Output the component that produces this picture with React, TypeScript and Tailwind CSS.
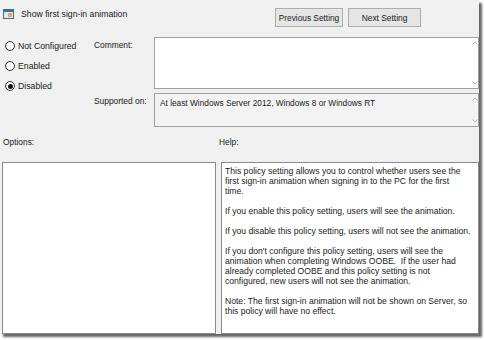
import { ReactNode } from "react";

const font = { fontFamily: '"Segoe UI", "Liberation Sans", Arial, sans-serif' };

function Radio({ label, checked }: { label: string; checked?: boolean }) {
  return (
    <div className="flex items-center h-[10px]">
      <span className="w-[10px] h-[10px] rounded-full border border-[#333] bg-white flex items-center justify-center">
        {checked && <span className="w-[5px] h-[5px] rounded-full bg-[#111]" />}
      </span>
      <span className="ml-[3px]">{label}</span>
    </div>
  );
}

function ScrollStub() {
  return (
    <div className="w-[7px] flex flex-col justify-between items-center py-[3px] text-[#b0b0b0]">
      <svg width="6" height="4" viewBox="0 0 6 4"><path d="M0.5 3.5 L3 1 L5.5 3.5" fill="none" stroke="currentColor" strokeWidth="1" /></svg>
      <svg width="6" height="4" viewBox="0 0 6 4"><path d="M0.5 0.5 L3 3 L5.5 0.5" fill="none" stroke="currentColor" strokeWidth="1" /></svg>
    </div>
  );
}

function Box({ children, className }: { children?: ReactNode; className: string }) {
  return <div className={"border border-[#a0a0a0] flex " + className}>{children}</div>;
}

const helpLines: string[][] = [
  [
    "This policy setting allows you to control whether users see the",
    "first sign-in animation when signing in to the PC for the first",
    "time.",
  ],
  ["If you enable this policy setting, users will see the animation."],
  ["If you disable this policy setting, users will not see the animation."],
  [
    "If you don't configure this policy setting, users will see the",
    "animation when completing Windows OOBE.  If the user had",
    "already completed OOBE and this policy setting is not",
    "configured, new users will not see the animation.",
  ],
  [
    "Note: The first sign-in animation will not be shown on Server, so",
    "this policy will have no effect.",
  ],
];

export default function App() {
  return (
    <div className="w-[484px] h-[340px] bg-white" style={font}>
      <div className="w-[479px] h-[334px] bg-[#f0f0f0] text-[8.4px] leading-[10px] text-[#1a1a1a] shadow-[3px_3px_2px_rgba(0,0,0,0.6)] flex flex-col">
        {/* Header */}
        <div className="h-[37px] flex items-start pt-[8px]">
          <div className="ml-[3px] mt-[1px] w-[11px] h-[10px] border border-[#3b6ea5] bg-[#dfe9f5] flex flex-col">
            <div className="h-[2px] bg-[#3b6ea5]" />
            <div className="flex-1 flex items-end justify-end p-[1px]">
              <div className="w-[4px] h-[4px] bg-[#e8b23c]" />
            </div>
          </div>
          <span className="ml-[7px] mt-[1px] text-[8.7px]">Show first sign-in animation</span>
          <div className="flex-1" />
          <div className="flex gap-[5px] mr-[58px]">
            <button className="w-[68px] h-[19px] border border-[#adadad] bg-[#e5e5e5] text-[8.3px]">Previous Setting</button>
            <button className="w-[73px] h-[19px] border border-[#adadad] bg-[#e5e5e5] text-[8.4px]">Next Setting</button>
          </div>
        </div>

        {/* Settings */}
        <div className="flex">
          <div className="w-[88px] pl-[5px] pt-[4px] flex flex-col gap-[10px] text-[8.7px]">
            <Radio label="Not Configured" />
            <Radio label="Enabled" />
            <Radio label="Disabled" checked />
          </div>
          <div className="w-[66px] flex flex-col pl-[6px]">
            <span className="mt-[3px]">Comment:</span>
            <span className="mt-[46px]">Supported on:</span>
          </div>
          <div className="flex-1 flex flex-col gap-[4px]">
            <Box className="h-[52px] bg-white justify-end">
              <ScrollStub />
            </Box>
            <Box className="h-[34px] bg-[#f3f3f3]">
              <span className="flex-1 pl-[5px] pt-[4px] text-[8.3px]">At least Windows Server 2012, Windows 8 or Windows RT</span>
              <ScrollStub />
            </Box>
          </div>
        </div>

        {/* Options / Help labels */}
        <div className="flex mt-[10px] h-[10px]">
          <span className="w-[219px] pl-[3px]">Options:</span>
          <span>Help:</span>
        </div>

        {/* Panels */}
        <div className="flex flex-1 mt-[15px] pl-[2px] gap-[5px]">
          <div className="w-[214px] bg-white border border-[#8a8a8a]" />
          <div className="flex-1 bg-white border border-[#8a8a8a] px-[3px] pt-[3px] flex flex-col gap-[10px] text-[8.6px]">
            {helpLines.map((para, i) => (
              <div key={i} className="flex flex-col">
                {para.map((line, j) => (
                  <span key={j} className="whitespace-pre">{line}</span>
                ))}
              </div>
            ))}
          </div>
        </div>
      </div>
    </div>
  );
}
